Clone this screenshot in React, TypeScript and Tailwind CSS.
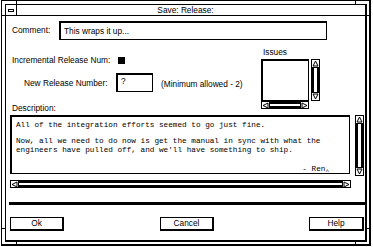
import React from 'react';

type Dir = 'up' | 'down' | 'left' | 'right';

const arrowPoints: Record<Dir, string> = {
  up: '3.5,1 6,6 1,6',
  down: '1,1 6,1 3.5,6',
  left: '1,3.5 6,1 6,6',
  right: '1,1 6,3.5 1,6',
};

function Arrow({ dir }: { dir: Dir }) {
  return (
    <svg width="7" height="7" viewBox="0 0 7 7" className="block">
      <polygon points={arrowPoints[dir]} fill="white" stroke="black" strokeWidth="1" />
    </svg>
  );
}

function VScroll({ h }: { h: string }) {
  return (
    <div className={`w-[9px] ${h} border border-black flex flex-col`}>
      <div className="h-[8px] flex items-center justify-center border-b border-black">
        <Arrow dir="up" />
      </div>
      <div className="flex-1 border-x-2 border-black bg-white" />
      <div className="h-[8px] flex items-center justify-center border-t border-black">
        <Arrow dir="down" />
      </div>
    </div>
  );
}

function HScroll({ w }: { w: string }) {
  return (
    <div className={`${w} h-[8px] border border-black flex`}>
      <div className="w-[8px] flex items-center justify-center border-r border-black">
        <Arrow dir="left" />
      </div>
      <div className="flex-1 border-y-2 border-black bg-white" />
      <div className="w-[8px] flex items-center justify-center border-l border-black">
        <Arrow dir="right" />
      </div>
    </div>
  );
}

function Button({ label, w }: { label: string; w: string }) {
  return (
    <div
      className={`${w} h-[14px] border-l border-t border-r-2 border-b-2 border-black flex items-center justify-center`}
    >
      {label}
    </div>
  );
}

export default function App() {
  return (
    <div className="w-[373px] h-[247px] bg-white overflow-hidden relative font-['Liberation_Sans',Arial,sans-serif] text-[8.3px] leading-none text-black">
      {/* outer window frame */}
      <div className="ml-[1px] w-[370px] h-[246px] border-l border-t border-r-2 border-b-2 border-black pl-[3px] pt-[3px] pr-[2px] pb-[2px]">
        {/* inner frame */}
        <div className="w-[362px] h-[238px] border-l border-t border-r-2 border-b-2 border-black flex flex-col">
          {/* title bar */}
          <div className="h-[11px] border-b border-black flex">
            <div className="w-[11px] border-r border-black flex items-center justify-center">
              <div className="w-[6px] h-[3px] border border-black" />
            </div>
            <div className="flex-1 flex items-center justify-center pr-[11px]">Save: Release:</div>
          </div>

          {/* client area */}
          <div className="flex-1 flex flex-col">
            {/* comment */}
            <div className="mt-[5px] ml-[6px] flex items-center h-[19px]">
              <span className="w-[47px]">Comment:</span>
              <div className="w-[268px] h-[19px] border-l-2 border-t-2 border-r border-b border-black pl-[3px] flex items-center">
                This wraps it up...
              </div>
            </div>

            <div className="flex">
              {/* left column */}
              <div className="w-[255px] flex flex-col">
                <div className="mt-[15px] ml-[6px] h-[10px] flex items-center">
                  <span className="w-[106px]">Incremental Release Num:</span>
                  <div className="w-[7px] h-[7px] bg-black" />
                </div>
                <div className="mt-[8px] ml-[18px] h-[19px] flex items-center">
                  <span className="w-[92px] pt-[1px]">New Release Number:</span>
                  <div className="w-[37px] h-[19px] border-l-2 border-t-2 border-r border-b border-black pl-[3px] pt-[2px]">
                    ?
                  </div>
                  <span className="ml-[8px] pt-[3px]">(Minimum allowed - 2)</span>
                </div>
                <div className="mt-[11px] ml-[6px] h-[10px] flex items-center">Description:</div>
              </div>

              {/* issues */}
              <div className="flex flex-col">
                <div className="mt-[7px] ml-[2px] h-[10px] flex items-center">Issues</div>
                <div className="mt-[2px] flex gap-[2px]">
                  <div className="w-[48px] h-[42px] border-l-2 border-t-2 border-r border-b border-black bg-white" />
                  <VScroll h="h-[42px]" />
                </div>
                <HScroll w="w-[48px]" />
              </div>
            </div>

            {/* description */}
            <div className="mt-[2px] ml-[4px] flex gap-[5px]">
              <div className="w-[340px] h-[59px] border-l-2 border-t-2 border-r border-b border-black px-[4px] pt-[4px] font-['Liberation_Mono','Courier_New',monospace] text-[7.7px] leading-[9.5px] whitespace-pre">
                <div>All of the integration efforts seemed to go just fine.</div>
                <div className="mt-[6px]">Now, all we need to do now is get the manual in sync with what the</div>
                <div>engineers have pulled off, and we'll have something to ship.</div>
                <div className="mt-[9px] text-right pr-[16px]">
                  - Ren<span className="relative top-[2px] text-[6px]">^</span>
                </div>
              </div>
              <VScroll h="h-[61px]" />
            </div>
            <div className="mt-[4px] ml-[4px]">
              <HScroll w="w-[341px]" />
            </div>

            {/* separator */}
            <div className="mt-[14px] ml-[3px] h-[3px] bg-black" />

            {/* buttons */}
            <div className="mt-[12px] ml-[4px] flex">
              <Button label="Ok" w="w-[54px]" />
              <div className="w-[96px]" />
              <Button label="Cancel" w="w-[54px]" />
              <div className="w-[95px]" />
              <Button label="Help" w="w-[55px]" />
            </div>
          </div>
        </div>
      </div>

      {/* resize handle ticks on the frame */}
      <div className="absolute left-[16px] top-0 w-px h-[4px] bg-black" />
      <div className="absolute left-[355px] top-0 w-px h-[4px] bg-black" />
      <div className="absolute left-[16px] top-[242px] w-px h-[4px] bg-black" />
      <div className="absolute left-[355px] top-[242px] w-px h-[4px] bg-black" />
      <div className="absolute left-[1px] top-[15px] w-[4px] h-px bg-black" />
      <div className="absolute left-[1px] top-[228px] w-[4px] h-px bg-black" />
      <div className="absolute left-[367px] top-[15px] w-[4px] h-px bg-black" />
      <div className="absolute left-[367px] top-[228px] w-[4px] h-px bg-black" />
    </div>
  );
}
